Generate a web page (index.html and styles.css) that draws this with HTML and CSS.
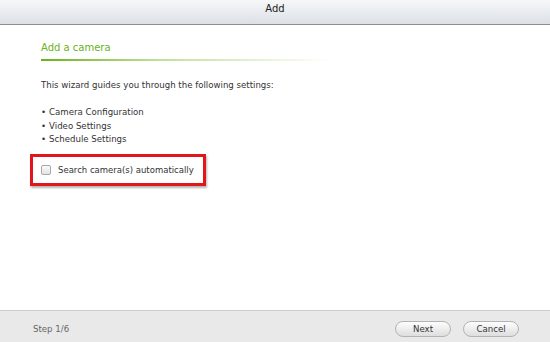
FILE: index.html
```html
<!DOCTYPE html>
<html>
    <head>
        <link rel="stylesheet" href="styles.css">
    </head>
    <body>
        <div class="dialog">
            <div class="titlebar">Add</div>
            <div class="content">
                <h2 class="heading">Add a camera</h2>
                <div class="rule"></div>
                <p class="intro">This wizard guides you through the following settings:</p>
                <ul class="steps">
                    <li>Camera Configuration</li>
                    <li>Video Settings</li>
                    <li>Schedule Settings</li>
                </ul>
                <div class="highlight">
                    <label class="option">
                        <span class="check"></span>
                        Search camera(s) automatically
                    </label>
                </div>
            </div>
            <div class="footer">
                <span class="stepnum">Step 1/6</span>
                <div class="actions">
                    <button type="button" class="btn">Next</button>
                    <button type="button" class="btn">Cancel</button>
                </div>
            </div>
        </div>
    </body>
</html>
```

FILE: styles.css
```css
body{
    margin: 0;
    font-family: "DejaVu Sans", Verdana, sans-serif;
    color: #333;
}
.dialog{
    width: 550px;
    height: 342px;
    display: flex;
    flex-direction: column;
    background-color: #fff;
}
.titlebar{
    height: 24px;
    line-height: 17px;
    text-align: center;
    font-size: 10px;
    color: #222;
    background: linear-gradient(#f6f7f9, #dce0e6);
    border-bottom: 1px solid #8e8e8e;
}
.content{
    flex: 1;
    padding-left: 41px;
}
.heading{
    margin: 16px 0 0 0;
    font-size: 10px;
    line-height: 14px;
    font-weight: normal;
    color: #6ab21c;
}
.rule{
    width: 290px;
    height: 2px;
    margin-top: 4px;
    background: linear-gradient(to right, #6ab21c, #bfe096 40%, #ffffff);
}
.intro{
    margin: 18px 0 0 0;
    font-size: 8.6px;
    line-height: 13px;
}
.steps{
    list-style: none;
    margin: 14px 0 0 0;
    padding: 0;
    font-size: 8.6px;
    line-height: 13.5px;
}
.steps li::before{
    content: "\2022";
    margin-right: 3px;
}
.highlight{
    width: 170px;
    height: 26px;
    margin: 7px 0 0 -11px;
    border: 3px solid #e3151b;
    box-shadow: 1px 2px 2px rgba(0,0,0,0.3);
    display: flex;
    align-items: center;
}
.option{
    display: flex;
    align-items: center;
    font-size: 8.5px;
    padding-left: 8px;
}
.check{
    width: 8px;
    height: 8px;
    margin-right: 7px;
    border: 1px solid #a9a9a9;
    border-radius: 2px;
    background: linear-gradient(#fafafa, #e2e2e2);
}
.footer{
    height: 31px;
    border-top: 1px solid #cdcdcd;
    background-color: #e9e9e9;
    display: flex;
    align-items: center;
    justify-content: space-between;
    padding: 0 31px 0 33px;
}
.stepnum{
    font-size: 8.6px;
    color: #666;
    margin-top: 4px;
}
.actions{
    display: flex;
    gap: 12px;
    margin-top: 5px;
}
.btn{
    width: 56px;
    height: 16px;
    padding: 0;
    border: 1px solid #b3b3b3;
    border-radius: 8px;
    background: linear-gradient(#fdfdfd, #dedede);
    font-family: "DejaVu Sans", Verdana, sans-serif;
    font-size: 8.6px;
    color: #333;
}
```
